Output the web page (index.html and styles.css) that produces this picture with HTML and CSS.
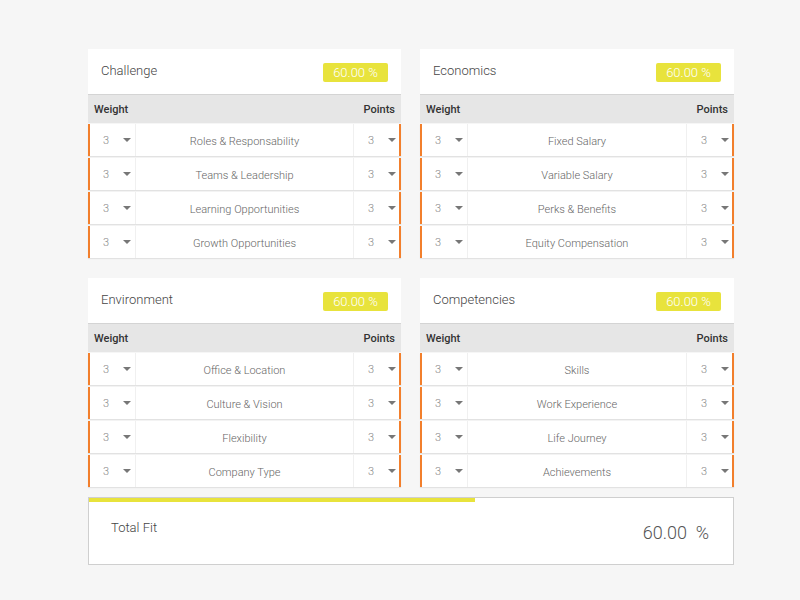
FILE: index.html
```html
<!DOCTYPE html>
<html>
<head>
<meta charset="utf-8">
<link rel="stylesheet" href="styles.css">
</head>
<body>
<div class="page">
  <div class="grid">
    <section class="card">
      <div class="card-head"><span class="title">Challenge</span><span class="badge">60.00 %</span></div>
      <div class="thead"><span>Weight</span><span>Points</span></div>
      <div class="row"><div class="sel">3<i class="caret"></i></div><div class="name">Roles &amp; Responsability</div><div class="sel pts">3<i class="caret"></i></div></div>
      <div class="row"><div class="sel">3<i class="caret"></i></div><div class="name">Teams &amp; Leadership</div><div class="sel pts">3<i class="caret"></i></div></div>
      <div class="row"><div class="sel">3<i class="caret"></i></div><div class="name">Learning Opportunities</div><div class="sel pts">3<i class="caret"></i></div></div>
      <div class="row"><div class="sel">3<i class="caret"></i></div><div class="name">Growth Opportunities</div><div class="sel pts">3<i class="caret"></i></div></div>
    </section>
    <section class="card">
      <div class="card-head"><span class="title">Economics</span><span class="badge">60.00 %</span></div>
      <div class="thead"><span>Weight</span><span>Points</span></div>
      <div class="row"><div class="sel">3<i class="caret"></i></div><div class="name">Fixed Salary</div><div class="sel pts">3<i class="caret"></i></div></div>
      <div class="row"><div class="sel">3<i class="caret"></i></div><div class="name">Variable Salary</div><div class="sel pts">3<i class="caret"></i></div></div>
      <div class="row"><div class="sel">3<i class="caret"></i></div><div class="name">Perks &amp; Benefits</div><div class="sel pts">3<i class="caret"></i></div></div>
      <div class="row"><div class="sel">3<i class="caret"></i></div><div class="name">Equity Compensation</div><div class="sel pts">3<i class="caret"></i></div></div>
    </section>
    <section class="card">
      <div class="card-head"><span class="title">Environment</span><span class="badge">60.00 %</span></div>
      <div class="thead"><span>Weight</span><span>Points</span></div>
      <div class="row"><div class="sel">3<i class="caret"></i></div><div class="name">Office &amp; Location</div><div class="sel pts">3<i class="caret"></i></div></div>
      <div class="row"><div class="sel">3<i class="caret"></i></div><div class="name">Culture &amp; Vision</div><div class="sel pts">3<i class="caret"></i></div></div>
      <div class="row"><div class="sel">3<i class="caret"></i></div><div class="name">Flexibility</div><div class="sel pts">3<i class="caret"></i></div></div>
      <div class="row"><div class="sel">3<i class="caret"></i></div><div class="name">Company Type</div><div class="sel pts">3<i class="caret"></i></div></div>
    </section>
    <section class="card">
      <div class="card-head"><span class="title">Competencies</span><span class="badge">60.00 %</span></div>
      <div class="thead"><span>Weight</span><span>Points</span></div>
      <div class="row"><div class="sel">3<i class="caret"></i></div><div class="name">Skills</div><div class="sel pts">3<i class="caret"></i></div></div>
      <div class="row"><div class="sel">3<i class="caret"></i></div><div class="name">Work Experience</div><div class="sel pts">3<i class="caret"></i></div></div>
      <div class="row"><div class="sel">3<i class="caret"></i></div><div class="name">Life Journey</div><div class="sel pts">3<i class="caret"></i></div></div>
      <div class="row"><div class="sel">3<i class="caret"></i></div><div class="name">Achievements</div><div class="sel pts">3<i class="caret"></i></div></div>
    </section>
  </div>
  <div class="total">
    <div class="bar"><div class="fill" style="width:60%"></div></div>
    <div class="total-body"><span class="total-label">Total Fit</span><span class="total-value">60.00&nbsp;&nbsp;%</span></div>
  </div>
</div>
</body>
</html>
```
FILE: styles.css
```css
html, body {
  margin: 0;
  padding: 0;
  background: #f6f6f6;
  font-family: Roboto, "Liberation Sans", sans-serif;
}
.page {
  width: 646px;
  margin-left: 88px;
  padding-top: 49px;
}
.grid {
  display: grid;
  grid-template-columns: 313px 314px;
  column-gap: 19px;
  row-gap: 20px;
}
.card-head {
  height: 45px;
  background: #fff;
  display: flex;
  align-items: center;
  justify-content: space-between;
  padding: 0 13px;
}
.title {
  font-size: 13px;
  font-weight: 300;
  color: #444;
  margin-top: -2px;
}
.badge {
  background: #e8e33c;
  color: #fff;
  font-size: 13px;
  font-weight: 300;
  width: 65px;
  height: 19px;
  line-height: 19px;
  text-align: center;
  border-radius: 2px;
  margin-top: 2px;
}
.thead {
  height: 28px;
  background: #e6e6e6;
  border-top: 1px solid #d4d4d4;
  display: flex;
  align-items: center;
  justify-content: space-between;
  padding: 0 6px;
  font-size: 11px;
  font-weight: 500;
  color: #333;
  margin-top: 0;
}
.row {
  height: 32px;
  background: #fff;
  border-left: 2px solid #f27f2c;
  border-right: 2px solid #f27f2c;
  display: flex;
  margin-top: 2px;
  box-shadow: 0 1px 1px rgba(0,0,0,0.08);
  font-size: 11px;
  font-weight: 300;
  color: #666;
}
.thead + .row {
  margin-top: 1px;
}
.sel {
  width: 45px;
  display: flex;
  align-items: center;
  padding-left: 13px;
  box-sizing: border-box;
  color: #888;
}
.sel.pts {
  width: 46px;
  padding-left: 14px;
  border-left: 1px solid #f0f0f0;
}
.caret {
  display: inline-block;
  width: 0;
  height: 0;
  border-left: 4px solid transparent;
  border-right: 4px solid transparent;
  border-top: 4px solid #777;
  margin-left: 14px;
}
.name {
  flex: 1;
  display: flex;
  align-items: center;
  justify-content: center;
  border-left: 1px solid #f0f0f0;
  padding-top: 3px;
}
.total {
  margin-top: 10px;
  height: 66px;
  background: #fff;
  border: 1px solid #cfcfcf;
}
.bar {
  height: 4px;
}
.fill {
  height: 4px;
  background: #e8e33c;
}
.total-body {
  display: flex;
  justify-content: space-between;
  align-items: flex-start;
  padding: 0 24px 0 22px;
  height: 61px;
}
.total-label {
  font-size: 13px;
  font-weight: 300;
  color: #444;
  margin-top: 18px;
}
.total-value {
  font-size: 18px;
  font-weight: 300;
  color: #555;
  margin-top: 20px;
}
```
